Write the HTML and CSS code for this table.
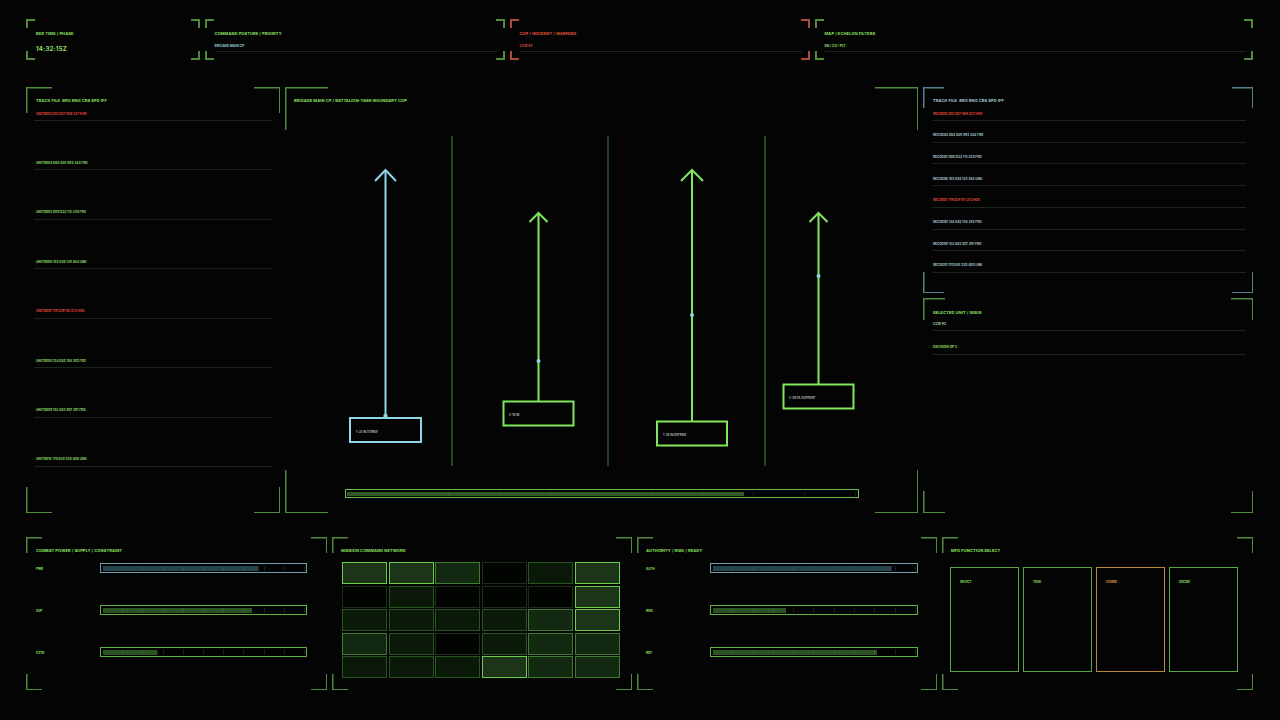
FILE: index.html
```html
<!DOCTYPE html>
<html lang="en">
<head>
<meta charset="utf-8">
<title>Brigade Main CP</title>
<link rel="stylesheet" href="styles.css">
</head>
<body>
<div class="screen">
  <div class="row-top">
    <section class="frame f-top">
      <div class="title">BDE TIME / PHASE</div>
      <div class="clock">14:32:15Z</div>
    </section>
    <section class="frame f-top">
      <div class="title">COMMAND POSTURE / PRIORITY</div>
      <div class="sub sub-cyan">BRIGADE MAIN CP</div>
    </section>
    <section class="frame f-top f-red">
      <div class="title t-red">COP / INCIDENT / WARNING</div>
      <div class="sub sub-red">CCIR 82</div>
    </section>
    <section class="frame f-top">
      <div class="title">MAP / ECHELON FILTERS</div>
      <div class="sub sub-green">BN / CO / PLT</div>
    </section>
  </div>

  <div class="row-main">
    <section class="frame f-left list-panel">
      <div class="title">TRACK FILE&nbsp; BRG RNG CRS SPD IFF</div>
      <ul class="tracks tracks-left">
        <li class="hos">UNIT0003 051 027 069 337 HOS</li>
        <li>UNIT0004 064 038 092 344 FRD</li>
        <li>UNIT0005 080 033 115 350 FRD</li>
        <li>UNIT0006 102 036 138 364 UNK</li>
        <li class="hos">UNIT0007 119 039 161 373 HOS</li>
        <li>UNIT0008 134 042 184 382 FRD</li>
        <li>UNIT0009 153 045 207 391 FRD</li>
        <li>UNIT0010 170 048 230 400 UNK</li>
      </ul>
    </section>

    <section class="frame f-center">
      <div class="title">BRIGADE MAIN CP / BATTALION-TASK-BOUNDARY COP</div>
      <svg class="cop" width="633" height="330" viewBox="285 136 633 330" xmlns="http://www.w3.org/2000/svg">
        <g stroke="#2d5c28" stroke-width="1.5">
          <line x1="452" y1="136" x2="452" y2="466"/>
          <line x1="608" y1="136" x2="608" y2="466"/>
          <line x1="765" y1="136" x2="765" y2="466"/>
        </g>
        <g fill="none" stroke="#8fd6e6" stroke-width="2">
          <line x1="385.5" y1="418" x2="385.5" y2="170"/>
          <polyline points="375,181 385.5,170 396,181"/>
          <rect x="350" y="418" width="71" height="24"/>
        </g>
        <g fill="none" stroke="#80e85e" stroke-width="2">
          <line x1="538.5" y1="401" x2="538.5" y2="213"/>
          <polyline points="529.5,222 538.5,213 547.5,222"/>
          <rect x="503.5" y="401.5" width="70" height="24"/>
          <line x1="692" y1="421" x2="692" y2="170"/>
          <polyline points="681,181 692,170 703,181"/>
          <rect x="657" y="421.5" width="70" height="24"/>
          <line x1="818.5" y1="384" x2="818.5" y2="213"/>
          <polyline points="809.5,222 818.5,213 827.5,222"/>
          <rect x="783.5" y="384.5" width="70" height="24"/>
        </g>
        <g fill="#8fd6e6">
          <circle cx="385.5" cy="416" r="2.2"/>
          <circle cx="538.5" cy="361" r="2"/>
          <circle cx="692" cy="315" r="2"/>
          <circle cx="818.5" cy="276" r="2"/>
        </g>
        <g class="unit-label" fill="#a8b4b0">
          <text x="356" y="433">1-32 IN STRIKE</text>
          <text x="509" y="416">2-16 IN</text>
          <text x="663" y="436">1-26 IN DEFEND</text>
          <text x="789" y="399">2-20 FA SUPPORT</text>
        </g>
      </svg>
      <div class="bar bar-wide bar-green" style="--p:78%"></div>
    </section>

    <div class="col-right">
      <section class="frame f-track list-panel">
        <div class="title t-cyan">TRACK FILE&nbsp; BRG RNG CRS SPD IFF</div>
        <ul class="tracks tracks-right">
          <li class="hos">REC0003 051 027 069 337 HOS</li>
          <li>REC0004 064 038 092 344 FRD</li>
          <li>REC0005 080 033 115 350 FRD</li>
          <li>REC0006 102 036 138 364 UNK</li>
          <li class="hos">REC0007 119 039 161 373 HOS</li>
          <li>REC0008 134 042 184 382 FRD</li>
          <li>REC0009 153 045 207 391 FRD</li>
          <li>REC0010 170 048 230 400 UNK</li>
        </ul>
      </section>
      <section class="frame f-sel">
        <div class="title">SELECTED UNIT / ISSUE</div>
        <ul class="sel-list">
          <li class="sel-a">CCIR 82</li>
          <li class="sel-b">DECISION DP 2</li>
        </ul>
      </section>
    </div>
  </div>

  <div class="row-bottom">
    <section class="frame f-bot">
      <div class="title">COMBAT POWER / SUPPLY / CONSTRAINT</div>
      <div class="meters">
        <div class="meter"><span class="m-label">PWR</span><div class="bar bar-cyan" style="--p:77%"></div></div>
        <div class="meter"><span class="m-label">SUP</span><div class="bar bar-green" style="--p:74%"></div></div>
        <div class="meter"><span class="m-label">CSTR</span><div class="bar bar-green" style="--p:27%"></div></div>
      </div>
    </section>
    <section class="frame f-bot">
      <div class="title">MISSION COMMAND NETWORK</div>
      <div class="net">
        <i class="l3"></i><i class="l3"></i><i class="l2"></i><i class="l0"></i><i class="l1"></i><i class="l3"></i>
        <i class="l0"></i><i class="l1"></i><i class="l0"></i><i class="l0"></i><i class="l0"></i><i class="l3"></i>
        <i class="l1"></i><i class="l1"></i><i class="l1"></i><i class="l1"></i><i class="l2"></i><i class="l3"></i>
        <i class="l2"></i><i class="l1"></i><i class="l0"></i><i class="l1"></i><i class="l2"></i><i class="l2"></i>
        <i class="l1"></i><i class="l1"></i><i class="l1"></i><i class="l3"></i><i class="l2"></i><i class="l2"></i>
      </div>
    </section>
    <section class="frame f-bot">
      <div class="title">AUTHORITY / RISK / READY</div>
      <div class="meters">
        <div class="meter"><span class="m-label">AUTH</span><div class="bar bar-cyan" style="--p:88%"></div></div>
        <div class="meter"><span class="m-label">RISK</span><div class="bar bar-green" style="--p:36%"></div></div>
        <div class="meter"><span class="m-label">RDY</span><div class="bar bar-green" style="--p:81%"></div></div>
      </div>
    </section>
    <section class="frame f-bot f-mfd">
      <div class="title">MFD FUNCTION SELECT</div>
      <div class="mfd">
        <div class="card"><span>SELECT</span></div>
        <div class="card"><span>TASK</span></div>
        <div class="card card-amber"><span>COORD</span></div>
        <div class="card"><span>DECIDE</span></div>
      </div>
    </section>
  </div>
</div>
</body>
</html>
```

FILE: styles.css
```css
* { box-sizing: border-box; }

html, body {
  margin: 0;
  padding: 0;
  background: #030403;
}

body {
  width: 1280px;
  height: 720px;
  overflow: hidden;
  font-family: "Inter", "DejaVu Sans", sans-serif;
  color: #8ee062;
}

.screen {
  padding: 19px 27px 0 26px;
  display: flex;
  flex-direction: column;
}

/* ---------- corner bracket frames ---------- */
.frame {
  --c: 9px;
  --t: 1.5px;
  --k: #4e8c3b;
  min-width: 0;
  background:
    linear-gradient(var(--k), var(--k)) left top / var(--c) var(--t),
    linear-gradient(var(--k), var(--k)) left top / var(--t) var(--c),
    linear-gradient(var(--k), var(--k)) right top / var(--c) var(--t),
    linear-gradient(var(--k), var(--k)) right top / var(--t) var(--c),
    linear-gradient(var(--k), var(--k)) left bottom / var(--c) var(--t),
    linear-gradient(var(--k), var(--k)) left bottom / var(--t) var(--c),
    linear-gradient(var(--k), var(--k)) right bottom / var(--c) var(--t),
    linear-gradient(var(--k), var(--k)) right bottom / var(--t) var(--c);
  background-repeat: no-repeat;
}

.f-top { --t: 2px; }
.f-red { --k: #a84a36; }
.f-left { --c: 26px; }
.f-center { --c: 43px; }
.f-track { --c: 21px; --k: #55828a; }
.f-sel { --c: 22px; }
.f-bot { --c: 16px; }

/* ---------- text ---------- */
.title {
  font-size: 4px;
  line-height: 5px;
  font-weight: 700;
  letter-spacing: 0.1px;
  white-space: nowrap;
  color: #8ee062;
}
.t-red { color: #e0543e; }
.t-cyan { color: #a6cad6; }

/* ---------- top row ---------- */
.row-top {
  display: grid;
  grid-template-columns: 174px 300px 300px minmax(0, 1fr);
  column-gap: 5px;
  height: 41px;
}

.f-top {
  padding: 11.5px 8px 0 9.5px;
}
.f-top:first-child { padding-left: 10px; }

.clock {
  margin-top: 9px;
  font-size: 6px;
  line-height: 7px;
  font-weight: 700;
  letter-spacing: 0.25px;
  color: #8ee26a;
}

.sub {
  margin-top: 8px;
  font-size: 3.3px;
  line-height: 5px;
  font-weight: 700;
  padding-bottom: 2.5px;
  border-bottom: 1px solid #1b271b;
  white-space: nowrap;
}
.sub-cyan { color: #8fc6d6; }
.sub-red { color: #d9503c; }
.sub-green { color: #8ad866; }

/* ---------- main row ---------- */
.row-main {
  margin-top: 27px;
  display: grid;
  grid-template-columns: 254px 633px minmax(0, 1fr);
  column-gap: 5px;
  height: 426px;
}

.list-panel {
  display: flex;
  flex-direction: column;
  padding-top: 10.5px;
}
.list-panel > .title { padding-left: 10px; }

.tracks {
  list-style: none;
  margin: 9px 0 0 0;
  padding: 0;
  flex: 1;
  display: flex;
  flex-direction: column;
  justify-content: space-between;
}
.tracks li {
  font-size: 3.2px;
  line-height: 5px;
  font-weight: 700;
  padding: 0 0 3.5px 2px;
  border-bottom: 1px solid #1a261a;
  white-space: nowrap;
}
.tracks-left { margin: 9px 8px 46px 8px; }
.tracks-left li { color: #8ed86c; }
.tracks-right { margin: 9px 7px 20px 9px; }
.tracks-right > li { padding-left: 1px; }
.tracks-right li { color: #a4c2ca; }
.tracks li.hos { color: #e0483a; }

.f-center {
  display: flex;
  flex-direction: column;
  align-items: stretch;
  padding-top: 10.5px;
}
.f-center > .title { padding-left: 9px; }

.cop {
  display: block;
  margin-top: 33.5px;
}
.unit-label text {
  font-family: "Inter", "DejaVu Sans", sans-serif;
  font-size: 3px;
  font-weight: 700;
}

.col-right {
  display: flex;
  flex-direction: column;
  gap: 5px;
  min-width: 0;
}
.f-track { height: 206px; }
.f-sel {
  flex: 1;
  padding-top: 11.5px;
}
.f-sel > .title { padding-left: 10px; }

.sel-list {
  list-style: none;
  margin: 7px 7px 0 9px;
  padding: 0;
  display: flex;
  flex-direction: column;
  gap: 14px;
}
.sel-list li {
  font-size: 3.3px;
  line-height: 5px;
  font-weight: 700;
  padding: 0 0 3.5px 1px;
  border-bottom: 1px solid #1a261a;
}
.sel-a { color: #a8c4a8; }
.sel-b { color: #8ed462; }

/* ---------- bars ---------- */
.bar {
  --p: 50%;
  --b: #62b848;
  --fill: #2c5524;
  height: 10px;
  border: 1.5px solid var(--b);
  background-color: #020302;
  background-image:
    repeating-linear-gradient(to right, transparent 0, transparent calc(10% - 1px), rgba(100, 140, 100, 0.22) calc(10% - 1px), rgba(100, 140, 100, 0.22) 10%),
    linear-gradient(var(--fill), var(--fill));
  background-size: 100% 100%, var(--p) 100%;
  background-repeat: no-repeat;
  background-origin: content-box;
  background-clip: content-box;
  padding: 1.5px;
}
.bar-green { --b: #5fb446; --fill: #2b5323; }
.bar-cyan { --b: #6f9eac; --fill: #27444d; }

.bar-wide {
  width: 514px;
  height: 9px;
  margin: 23px auto 0 auto;
  --b: #66c04a;
  --fill: #2f5a26;
}

/* ---------- bottom row ---------- */
.row-bottom {
  margin-top: 24px;
  display: grid;
  grid-template-columns: 301px 300px 300px minmax(0, 1fr);
  column-gap: 5px;
  height: 153px;
}

.f-bot {
  padding: 10.5px 20px 0 10px;
}
.f-bot:nth-child(2) { padding-left: 9px; }
.f-bot:nth-child(3) { padding-right: 19px; padding-left: 9px; }

.meters {
  margin-top: 10.5px;
  display: flex;
  flex-direction: column;
  gap: 32px;
}
.meter {
  display: flex;
  align-items: center;
}
.m-label {
  width: 64px;
  flex: none;
  font-size: 3px;
  line-height: 5px;
  font-weight: 700;
  color: #8ee062;
  padding-top: 3px;
}
.meter .bar { flex: 1; }

.net {
  margin: 9.5px 0 0 1px;
  display: grid;
  grid-template-columns: repeat(6, 45px);
  grid-template-rows: repeat(5, 22px);
  gap: 1.5px;
}
.net i {
  display: block;
  border: 1.5px solid #1a2e18;
  background: #020402;
}
.net i.l1 { border-color: #2b5423; background: #0b1909; }
.net i.l2 { border-color: #3f7c32; background: #132810; }
.net i.l3 { border-color: #6ccd4c; background: #1c3518; }

.f-bot.f-mfd { padding: 10.5px 0 0 9px; }
.mfd {
  margin: 14.5px 0 0 -1px;
  display: flex;
  gap: 4px;
}
.card {
  width: 69px;
  height: 105px;
  flex: none;
  border: 1.5px solid #5aa646;
  padding: 11.5px 0 0 9px;
  font-size: 3px;
  line-height: 5px;
  font-weight: 700;
  color: #8ee062;
}
.card-amber {
  border-color: #b8873a;
  color: #d8a040;
}
```
